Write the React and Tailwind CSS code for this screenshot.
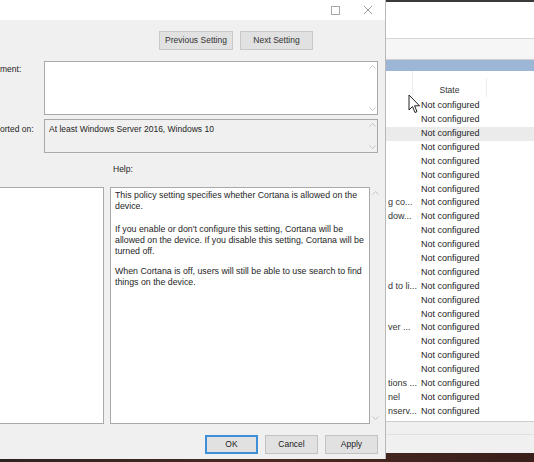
import React from 'react';

const font = { fontFamily: '"Liberation Sans", Arial, sans-serif' };

const names = {
  7: 'g co...',
  8: 'dow...',
  13: 'd to li...',
  16: 'ver ...',
  20: 'tions ...',
  21: 'nel',
  22: 'nserv...',
};

function ScrollArrows({ className = '' }) {
  return (
    <div className={`flex flex-col justify-between items-center w-[10px] py-[3px] ${className}`}>
      <svg width="7" height="4" viewBox="0 0 7 4"><path d="M0.5 3.5 L3.5 0.5 L6.5 3.5" fill="none" stroke="#c4c4c4" strokeWidth="1" /></svg>
      <svg width="7" height="4" viewBox="0 0 7 4"><path d="M0.5 0.5 L3.5 3.5 L6.5 0.5" fill="none" stroke="#c4c4c4" strokeWidth="1" /></svg>
    </div>
  );
}

function Btn({ children, primary }) {
  return (
    <button
      className={`w-[53px] h-[19px] text-[8.5px] text-[#222] bg-[#e1e1e1] ${primary ? 'border-2 border-[#3d8fd6]' : 'border border-[#c2c2c2]'}`}
    >
      {children}
    </button>
  );
}

function Dialog() {
  return (
    <div className="w-[386px] h-[459px] shrink-0 flex flex-col bg-[#f0f0f0] border-r border-[#b9b9b9] text-[#1e1e1e]">
      {/* title bar */}
      <div className="h-[20px] bg-white flex items-center justify-end pr-[12px] gap-[23px]">
        <div className="w-[9px] h-[9px] border border-[#a8a8a8]" />
        <svg width="10" height="10" viewBox="0 0 10 10">
          <path d="M1 1 L9 9 M9 1 L1 9" stroke="#9a9a9a" strokeWidth="1" />
        </svg>
      </div>

      <div className="flex justify-end gap-[7px] pr-[72px] mt-[11px]">
        <button className="w-[74px] h-[19px] text-[8.5px] bg-[#e1e1e1] border border-[#c8c8c8] text-[#333]">Previous Setting</button>
        <button className="w-[73px] h-[19px] text-[8.5px] bg-[#e1e1e1] border border-[#c8c8c8] text-[#333]">Next Setting</button>
      </div>

      {/* comment */}
      <div className="flex mt-[11px] pr-[7px]">
        <div className="w-[44px] text-[8.5px] pt-[2px]">ment:</div>
        <div className="flex-1 h-[54px] bg-white border border-[#a9a9a9] flex justify-end">
          <ScrollArrows />
        </div>
      </div>

      {/* supported on */}
      <div className="flex mt-[4px] pr-[7px]">
        <div className="w-[44px] text-[8.5px] pt-[4px] whitespace-nowrap overflow-hidden">orted on:</div>
        <div className="flex-1 h-[34px] bg-[#f0f0f0] border border-[#a9a9a9] flex justify-between">
          <div className="text-[8.5px] pl-[4px] pt-[3px]">At least Windows Server 2016, Windows 10</div>
          <ScrollArrows />
        </div>
      </div>

      <div className="pl-[113px] mt-[10px] text-[8.5px] h-[14px]">Help:</div>

      <div className="flex mt-[10px] h-[237px]">
        <div className="w-[104px] bg-white border border-l-0 border-[#a9a9a9]" />
        <div className="w-[6px]" />
        <div className="w-[260px] bg-white border border-[#a9a9a9] pl-[4px] pr-[2px] pt-[2px] text-[8.8px] leading-[11px]">
          <p>This policy setting specifies whether Cortana is allowed on the device.</p>
          <p className="mt-[12px]">If you enable or don't configure this setting, Cortana will be allowed on the device. If you disable this setting, Cortana will be turned off.</p>
          <p className="mt-[9px]">When Cortana is off, users will still be able to use search to find things on the device.</p>
        </div>
        <ScrollArrows className="!py-[4px]" />
      </div>

      <div className="flex justify-end gap-[7px] pr-[7px] mt-[11px]">
        <Btn primary>OK</Btn>
        <Btn>Cancel</Btn>
        <Btn>Apply</Btn>
      </div>
    </div>
  );
}

function ListWindow() {
  const rows = Array.from({ length: 24 });
  return (
    <div className="flex-1 h-[453px] flex flex-col bg-white overflow-hidden">
      <div className="h-[2px] bg-[#3a3a3a]" />
      <div className="h-[37px] bg-white border-b border-[#d6d6d6]" />
      <div className="h-[21px] bg-[#f6f6f6] border-b border-[#cfcfcf]" />
      <div className="h-[11px] bg-[#9db6d6]" />
      <div className="h-[350px] overflow-hidden relative">
        <div className="flex h-[28px] items-end pb-[2px] text-[8.5px] text-[#333]">
          <div className="w-[27px] border-r border-[#ececec] h-full" />
          <div className="w-[74px] text-center border-r border-[#ececec] pt-[6px]">State</div>
        </div>
        {rows.map((_, i) => (
          <div key={i} className={`flex items-center h-[13.9px] text-[9px] whitespace-nowrap ${i === 2 ? 'bg-[#ebebeb]' : ''}`}>
            <div className="w-[35px] overflow-hidden pl-[2px] text-[#333]">{names[i] || ''}</div>
            <div className="text-[#1e1e1e]">Not configured</div>
          </div>
        ))}
        <svg className="absolute left-[22px] top-[23px]" width="13" height="21" viewBox="0 0 13 21">
          <path d="M1 1 L1 16 L4.5 12.5 L7 18.5 L9 17.6 L6.6 11.8 L11.5 11.8 Z" fill="white" stroke="#222" strokeWidth="1" strokeLinejoin="round" />
        </svg>
      </div>
      <div className="flex-1 bg-[#f0f0f0] border-t border-[#cdcdcd] flex flex-col">
        <div className="h-[13px] border-b border-[#e0e0e0]" />
      </div>
    </div>
  );
}

export default function App() {
  return (
    <div className="w-[534px] h-[462px] overflow-hidden bg-gradient-to-r from-[#2b2322] via-[#4a2a22] to-[#3a1f1a] flex items-start" style={font}>
      <Dialog />
      <ListWindow />
    </div>
  );
}
